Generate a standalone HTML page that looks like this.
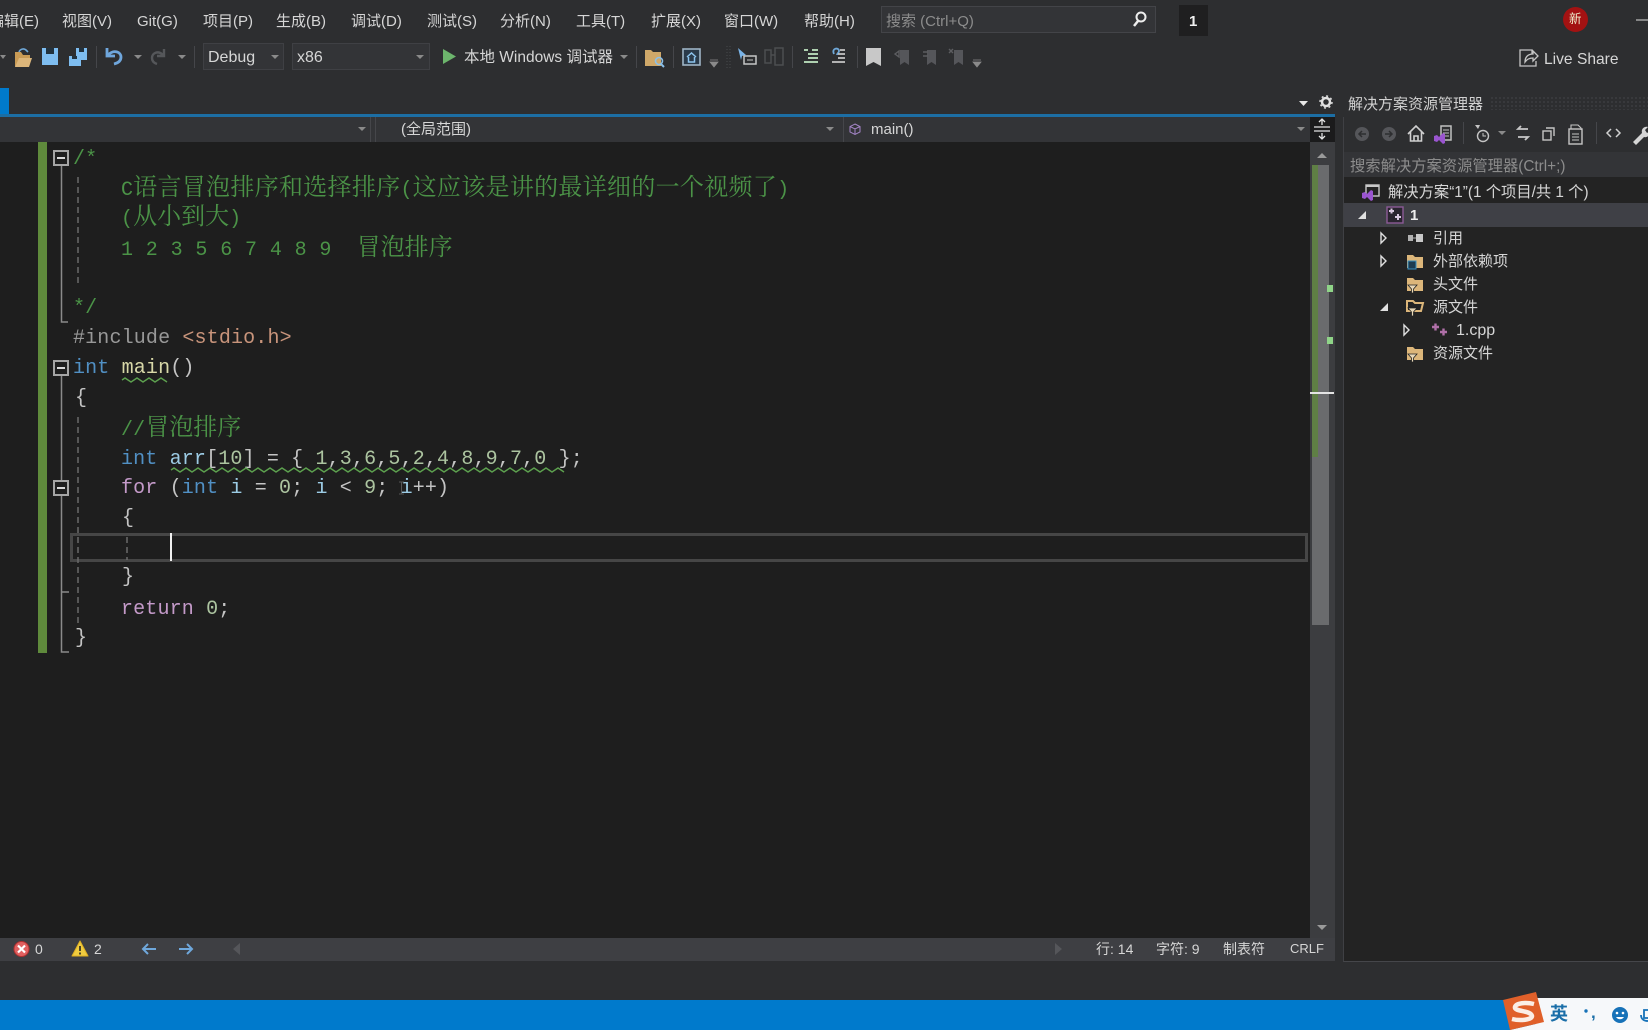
<!DOCTYPE html>
<html lang="zh"><head><meta charset="utf-8"><title>Visual Studio</title>
<style>
html,body{margin:0;padding:0;width:1648px;height:1030px;overflow:hidden;background:#2d2e30;}
body{position:relative;font-family:"Liberation Sans","Noto Sans CJK SC",sans-serif;color:#e0e0e0;}
.b{position:absolute;}
.t{position:absolute;white-space:nowrap;transform:translateY(-50%);line-height:30px;font-size:15px;color:#d6d6d6;}
.c{position:absolute;white-space:pre;transform:translateY(-50%);line-height:30px;font-family:"Liberation Mono",monospace;font-size:20px;letter-spacing:.15px;color:#c4c4c4;left:73px;}
.c .z{font-family:"Noto Serif CJK SC",serif;font-size:24px;line-height:30px;letter-spacing:0;}
.g{color:#4b9347}.k{color:#5190c4}.f{color:#c49ac9}.v{color:#9ccbe4}.m{color:#d8d8a8}.n{color:#acc4a0}.s{color:#c8947b}.p{color:#989898}
svg{position:absolute;left:0;top:0;}
</style></head><body>
<!-- regions -->
<div class="b" style="left:0;top:88px;width:9px;height:26px;background:#007acc"></div>
<div class="b" style="left:0;top:114px;width:1335px;height:3px;background:#1c6ea4"></div>
<div class="b" style="left:0;top:117px;width:1335px;height:25px;background:#333437"></div>
<div class="b" style="left:0;top:142px;width:1335px;height:796px;background:#1e1e1e"></div>
<div class="b" style="left:370px;top:117px;width:1px;height:25px;background:#45464a"></div>
<div class="b" style="left:375px;top:117px;width:1px;height:25px;background:#45464a"></div>
<div class="b" style="left:843px;top:117px;width:1px;height:25px;background:#45464a"></div>
<div class="b" style="left:1310px;top:117px;width:25px;height:25px;background:#1b1b1c"></div>
<div class="b" style="left:0;top:938px;width:1335px;height:23px;background:#3e3f43"></div>
<div class="b" style="left:0;top:1000px;width:1648px;height:30px;background:#007acc"></div>
<!-- scrollbar -->
<div class="b" style="left:1310px;top:142px;width:25px;height:796px;background:#3c3d40"></div>
<div class="b" style="left:1312px;top:165px;width:17px;height:460px;background:#6a6b6d"></div>
<div class="b" style="left:1312px;top:165px;width:6px;height:292px;background:#5f7f45"></div>
<div class="b" style="left:1327px;top:285px;width:6px;height:7px;background:#8fd488"></div>
<div class="b" style="left:1327px;top:337px;width:6px;height:7px;background:#8fd488"></div>
<div class="b" style="left:1310px;top:392px;width:24px;height:2px;background:#e4e4e4"></div>
<!-- solution panel -->
<div class="b" style="left:1343px;top:117px;width:305px;height:845px;background:#232323;border-left:1px solid #3f4044;box-sizing:border-box;border-bottom:1px solid #45464a"></div>
<div class="b" style="left:1344px;top:117px;width:304px;height:35px;background:#2d2e30"></div>
<div class="b" style="left:1344px;top:152px;width:304px;height:25px;background:#333437"></div>
<div class="b" style="left:1344px;top:203px;width:304px;height:24px;background:#3f4046"></div>
<div class="b" style="left:1490px;top:96px;width:158px;height:14px;background-image:radial-gradient(#3c3d40 1px,transparent 1px);background-size:4px 4px"></div>
<!-- menu -->
<div class="b" style="left:881px;top:6px;width:275px;height:27px;background:#333437;border:1px solid #434448;box-sizing:border-box"></div>
<div class="b" style="left:1179px;top:5px;width:29px;height:31px;background:#1f1f20"></div>
<span class="t" style="left:-11px;top:22px">编辑(E)</span>
<span class="t" style="left:62px;top:22px">视图(V)</span>
<span class="t" style="left:137px;top:22px">Git(G)</span>
<span class="t" style="left:203px;top:22px">项目(P)</span>
<span class="t" style="left:276px;top:22px">生成(B)</span>
<span class="t" style="left:351px;top:22px">调试(D)</span>
<span class="t" style="left:427px;top:22px">测试(S)</span>
<span class="t" style="left:500px;top:22px">分析(N)</span>
<span class="t" style="left:576px;top:22px">工具(T)</span>
<span class="t" style="left:651px;top:22px">扩展(X)</span>
<span class="t" style="left:724px;top:22px">窗口(W)</span>
<span class="t" style="left:804px;top:22px">帮助(H)</span>
<span class="t" style="left:886px;top:22px;color:#8c8c8c">搜索 (Ctrl+Q)</span>
<span class="t" style="left:1189px;top:22px;font-weight:bold;color:#f0f0f0;font-size:15px">1</span>
<div class="b" style="left:1563px;top:7px;width:25px;height:25px;border-radius:50%;background:#a31212"></div>
<span class="t" style="left:1569px;top:19px;font-size:12.5px;color:#eec">新</span>
<span class="t" style="left:1636px;top:20px;color:#ddd">—</span>
<!-- toolbar -->
<div class="b" style="left:203px;top:43px;width:81px;height:27px;background:#333437;border:1px solid #3f4044;box-sizing:border-box"></div>
<div class="b" style="left:292px;top:43px;width:138px;height:27px;background:#333437;border:1px solid #3f4044;box-sizing:border-box"></div>
<span class="t" style="left:208px;top:58px;font-size:16px">Debug</span>
<span class="t" style="left:297px;top:58px;font-size:16px">x86</span>
<span class="t" style="left:464px;top:58px;font-size:15.500px">本地 Windows 调试器</span>
<span class="t" style="left:1544px;top:60px;font-size:15.600px">Live Share</span>
<!-- nav -->
<span class="t" style="left:401px;top:130px;font-size:15px">(全局范围)</span>
<span class="t" style="left:871px;top:130px;font-size:15px">main()</span>
<!-- solution explorer text -->
<span class="t" style="left:1348px;top:105px;font-size:15px;color:#d0d0d0">解决方案资源管理器</span>
<span class="t" style="left:1350px;top:167px;font-size:15.300px;color:#8c8c8c">搜索解决方案资源管理器(Ctrl+;)</span>
<span class="t" style="left:1388px;top:193px;font-size:15.300px">解决方案“1”(1 个项目/共 1 个)</span>
<span class="t" style="left:1410px;top:216px;font-weight:bold;color:#eee">1</span>
<span class="t" style="left:1433px;top:239px">引用</span>
<span class="t" style="left:1433px;top:262px">外部依赖项</span>
<span class="t" style="left:1433px;top:285px">头文件</span>
<span class="t" style="left:1433px;top:308px">源文件</span>
<span class="t" style="left:1456px;top:331px;font-size:16px">1.cpp</span>
<span class="t" style="left:1433px;top:354px">资源文件</span>
<!-- status -->
<span class="t" style="left:35px;top:949px;font-size:14px">0</span>
<span class="t" style="left:94px;top:949px;font-size:14px">2</span>
<span class="t" style="left:1096px;top:949px;font-size:14px">行: 14</span>
<span class="t" style="left:1156px;top:949px;font-size:14px">字符: 9</span>
<span class="t" style="left:1223px;top:949px;font-size:14px">制表符</span>
<span class="t" style="left:1290px;top:949px;font-size:13px">CRLF</span>
<!-- editor adornments -->
<div class="b" style="left:38px;top:142px;width:9px;height:511px;background:#5f8a3c"></div>
<div class="b" style="left:70px;top:533px;width:1238px;height:29px;border:3px solid #464646;box-sizing:border-box"></div>
<!-- code -->
<div class="c g" style="top:160px">/*</div>
<div class="c g" style="top:188px;left:121px">C<span class="z" style="letter-spacing:.3px">语言冒泡排序和选择排序</span>(<span class="z" style="letter-spacing:.3px">这应该是讲的最详细的一个视频了</span>)</div>
<div class="c g" style="top:217px;left:121px">(<span class="z">从小到大</span>)</div>
<div class="c g" style="top:248px;left:121px;letter-spacing:.4px">1 2 3 5 6 7 4 8 9  <span class="z">冒泡排序</span></div>
<div class="c g" style="top:309px">*/</div>
<div class="c" style="top:339px"><span class="p">#include</span> <span class="s">&lt;stdio.h&gt;</span></div>
<div class="c" style="top:369px"><span class="k">int</span> <span class="m">main</span>()</div>
<div class="c" style="top:399px;left:75px">{</div>
<div class="c g" style="top:428px;left:121px">//<span class="z">冒泡排序</span></div>
<div class="c" style="top:460px;left:121px"><span class="k">int</span> <span class="v">arr</span>[<span class="n">10</span>] = { <span class="n">1</span>,<span class="n">3</span>,<span class="n">6</span>,<span class="n">5</span>,<span class="n">2</span>,<span class="n">4</span>,<span class="n">8</span>,<span class="n">9</span>,<span class="n">7</span>,<span class="n">0</span> };</div>
<div class="c" style="top:489px;left:121px"><span class="f">for</span> (<span class="k">int</span> <span class="v">i</span> = <span class="n">0</span>; <span class="v">i</span> &lt; <span class="n">9</span>; <span class="v">i</span>++)</div>
<div class="c" style="top:519px;left:122px">{</div>
<div class="c" style="top:578px;left:122px">}</div>
<div class="c" style="top:610px;left:121px"><span class="f">return</span> <span class="n">0</span>;</div>
<div class="c" style="top:639px;left:75px">}</div>
<!-- caret -->
<div class="b" style="left:170px;top:533px;width:2px;height:28px;background:#f0f0f0"></div>
<!-- sogou bar -->
<div class="b" style="left:1536px;top:998px;width:112px;height:32px;background:#f6f8fa"></div>

<svg width="1648" height="1030" viewBox="0 0 1648 1030" fill="none">
<!-- fold boxes -->
<g stroke="#a5a5a5" stroke-width="2" fill="#1e1e1e">
<rect x="54" y="151" width="14" height="14"/><rect x="54" y="361" width="14" height="14"/><rect x="54" y="481" width="14" height="14"/>
</g>
<g stroke="#d8d8d8" stroke-width="2"><path d="M57 158h8M57 368h8M57 488h8"/></g>
<g stroke="#8a8a8a" stroke-width="1.5">
<path d="M61.5 166V322H68M61.5 376V480M61.5 496V652H69M61.5 592H69"/>
</g>
<g stroke="#6a6a6a" stroke-width="1.5" stroke-dasharray="6 4">
<path d="M78 177V284M78 417V624M127 537V560"/>
</g>
<!-- squiggles -->
<g stroke="#5da14f" stroke-width="1.4">
<path d="M122 380l3-2 3 2 3 2 3-2 3-2 3 2 3 2 3-2 3-2 3 2 3 2 3-2 3-2 3 2 3 2"/>
<path d="M171 470l3-2 3 2 3 2 3-2 3-2 3 2 3 2 3-2 3-2 3 2 3 2 3-2 3-2 3 2 3 2 3-2 3-2 3 2 3 2 3-2 3-2 3 2 3 2 3-2 3-2 3 2 3 2 3-2 3-2 3 2 3 2 3-2 3-2 3 2 3 2 3-2 3-2 3 2 3 2 3-2 3-2 3 2 3 2 3-2 3-2 3 2 3 2 3-2 3-2 3 2 3 2 3-2 3-2 3 2 3 2 3-2 3-2 3 2 3 2 3-2 3-2 3 2 3 2 3-2 3-2 3 2 3 2 3-2 3-2 3 2 3 2 3-2 3-2 3 2 3 2 3-2 3-2 3 2 3 2 3-2 3-2 3 2 3 2 3-2 3-2 3 2 3 2 3-2 3-2 3 2 3 2 3-2 3-2 3 2 3 2 3-2 3-2 3 2 3 2 3-2 3-2 3 2 3 2 3-2 3-2 3 2 3 2 3-2 3-2 3 2 3 2 3-2 3-2 3 2 3 2 3-2 3-2 3 2 3 2 3-2 3-2 3 2 3 2 3-2 3-2 3 2 3 2 3-2 3-2 3 2 3 2"/>
</g>
<!-- I-beam -->
<path d="M399 482h5M399 494h5M401.500 482v12" stroke="#555" stroke-width="1"/>
<!-- search icon -->
<circle cx="1141" cy="17" r="4.500" stroke="#eee" stroke-width="2"/><path d="M1138 21l-4 5" stroke="#eee" stroke-width="2.500"/>
<!-- toolbar separators -->
<g stroke="#45464a"><path d="M96.500 46v22M194.500 46v22M636.500 46v22M673.500 46v22M792.500 46v22M857.500 46v22"/></g>
<!-- dropdown triangles -->
<g fill="#8a8a8a">
<path d="M0 55h6l-3 4zM134 55h8l-4 4zM178 55h8l-4 4z"/>
<path d="M271 55h8l-4 4zM416 55h8l-4 4zM620 55h8l-4 4z"/>
<path d="M358 127h8l-4 4zM826 127h8l-4 4zM1297 127h8l-4 4z"/>
<path d="M1498 131h8l-4 4z"/>
</g>
<path d="M1299 101h9l-4.500 5z" fill="#e8e8e8"/>
<!-- open folder -->
<path d="M15 52h6l2 3h7v3H20l-5 9z" fill="#c99b55"/><path d="M19 58h13l-3 9H15z" fill="#dcb67a"/><path d="M19 52c1-3 5-4 7-2l2 2" stroke="#6fa8d8" stroke-width="1.600"/>
<!-- save -->
<path d="M42 48h16v17H42z" fill="#7ebdf0"/><path d="M46 48h8v6h-8z" fill="#22323e"/>
<!-- save all -->
<path d="M69 56h12v10H69z" fill="#7ebdf0"/><path d="M76 48h11v12H76z" fill="#7ebdf0"/><path d="M79 48h5v4h-5zM72 56h5v3h-5z" fill="#22323e"/>
<!-- undo / redo -->
<path d="M107 48v8h8M108 55c6-6 13-3 13 2 0 4-3 6-7 7" stroke="#6fa6dc" stroke-width="2.800"/>
<path d="M164 49v7h-7M163 55c-5-5-11-2-11 3 0 3 2 5 5 6" stroke="#55575a" stroke-width="2.400"/>
<!-- play -->
<path d="M443 49l13 7.500-13 7.500z" fill="#6cb56c"/>
<!-- folder search -->
<path d="M645 50h6l2 2h8v14h-16z" fill="#cfa869"/><circle cx="659" cy="61" r="3.500" stroke="#8cc0e8" stroke-width="1.600"/><path d="M661 64l3 3" stroke="#8cc0e8" stroke-width="2"/>
<!-- home window -->
<rect x="683" y="49" width="17" height="16" stroke="#9eb4c6" stroke-width="1.600" fill="#2a3a4a"/><path d="M687 57l4.500-4 4.500 4M688.500 57v5h6v-5" stroke="#8cc4ee" stroke-width="1.500"/>
<path d="M710 60h8M710 62h8l-4 5z" stroke="#8a8a8a" fill="#8a8a8a" stroke-width=".8"/>
<path d="M727 46v22M730 46v22" stroke="#48494c" stroke-dasharray="1 2"/>
<!-- step -->
<path d="M738 48l8 7-4 1-1 4z" fill="#7ab4e8"/><rect x="744" y="56" width="12" height="8" stroke="#c5c5c5" stroke-width="1.500"/><path d="M747 60h6" stroke="#c5c5c5"/>
<path d="M765 50h6v13h-6zM775 48h8v17h-8zM771 55h4" stroke="#4d4e50" stroke-width="1.500"/>
<!-- comment icons -->
<path d="M804 50h4M808 54h10M808 58h10M804 62h14M812 50h6" stroke="#aed0b0" stroke-width="2"/>
<path d="M834 54c-3-6 5-7 5-3 0 2-2 2-2 4" stroke="#6fa8d8" stroke-width="1.800"/><path d="M838 54h7M838 58h7M832 62h13M840 50h5" stroke="#c5c5c5" stroke-width="1.800"/>
<!-- bookmarks -->
<path d="M866 48h15v18l-7.500-4-7.500 4z" fill="#c8c8c8"/>
<path d="M900 50h9v15l-4.500-3-4.500 3zM927 50h9v15l-4.500-3-4.500 3zM954 50h9v15l-4.500-3-4.500 3z" fill="#55565a"/>
<path d="M895 54l4-3v6zM923 52h5M923 56h5M949 49l4 4M953 49l-4 4" stroke="#5c5d60" stroke-width="1.400"/>
<path d="M973 60h8M973 62h8l-4 5z" stroke="#8a8a8a" fill="#8a8a8a" stroke-width=".8"/>
<!-- live share -->
<path d="M1532 54v-4h-12v16h16v-5" stroke="#c5c5c5" stroke-width="1.300"/><path d="M1525 62c0-5 3-8 8-8v-3l5 5-5 5v-3c-3 0-6 1-8 4z" stroke="#c5c5c5" stroke-width="1.300"/>
<!-- nav cube -->
<path d="M855 124l5 2.500v5.500l-5 2.500-5-2.500v-5.500zM850 126.500l5 2.500 5-2.500M855 129v5.500" stroke="#a585c8" stroke-width="1"/>
<!-- split button -->
<path d="M1314 127h16M1314 131h16M1322 120v5M1322 133v5M1319 122l3-3 3 3M1319 136l3 3 3-3" stroke="#e4e4e4" stroke-width="1.300"/>
<!-- gear -->
<circle cx="1326" cy="102" r="4" stroke="#e0e0e0" stroke-width="2.500"/><circle cx="1326" cy="102" r="6" stroke="#e0e0e0" stroke-width="1.500" stroke-dasharray="2 2.700"/>
<!-- scroll arrows -->
<path d="M1317 158l5-5 5 5z" fill="#9a9a9a"/><path d="M1317 925l5 5 5-5z" fill="#9a9a9a"/>
<!-- panel toolbar -->
<circle cx="1362" cy="134" r="7" fill="#55565a"/><path d="M1366 134h-7M1362 131l-3 3 3 3" stroke="#2d2e30" stroke-width="1.500"/>
<circle cx="1389" cy="134" r="7" fill="#55565a"/><path d="M1385 134h7M1389 131l3 3-3 3" stroke="#2d2e30" stroke-width="1.500"/>
<path d="M1408 134l8-8 8 8M1410.500 132v9h11v-9M1414 141v-5h4v5" stroke="#d0d0d0" stroke-width="1.600"/>
<rect x="1441" y="126" width="10" height="14" stroke="#c0c0c0" stroke-width="1.500"/><path d="M1443 130h6M1443 133h6M1443 136h6" stroke="#c0c0c0"/><path d="M1434 136l3-1 2 2 4-4 2 1v9l-2 1-4-4-2 2-3-1z" fill="#9a55d0"/>
<path d="M1463.500 122v22" stroke="#45464a"/>
<circle cx="1483" cy="136" r="5.500" stroke="#c5c5c5" stroke-width="1.400"/><path d="M1483 133v3h3" stroke="#c5c5c5"/><path d="M1475 125h5l-2 4z" fill="#c5c5c5"/>
<path d="M1528 129h-10l3-3M1518 137h10l-3 3" stroke="#c8c8c8" stroke-width="1.800"/>
<rect x="1543" y="131" width="8" height="9" stroke="#c5c5c5" stroke-width="1.400"/><path d="M1546 128h8v8" stroke="#c5c5c5" stroke-width="1.400"/>
<rect x="1569" y="129" width="13" height="15" stroke="#c5c5c5" stroke-width="1.400"/><path d="M1571 129v-4h7l3 3v2M1572 134h7M1572 137h7M1572 140h7" stroke="#c5c5c5" stroke-width="1.100"/>
<path d="M1596.500 122v22" stroke="#45464a"/>
<path d="M1611 129l-4 4 4 4M1616 129l4 4-4 4" stroke="#d0d0d0" stroke-width="1.500"/>
<path d="M1633 142l9-9c-1-4 2-7 6-6l-3 3 2 3 3-2c1 4-3 7-6 6l-8 8z" fill="#d5d5d5"/>
<!-- tree arrows -->
<path d="M1358 219l8-8v8z" fill="#e0e0e0"/><path d="M1380 311l8-8v8z" fill="#e0e0e0"/>
<g stroke="#e0e0e0" stroke-width="1.400"><path d="M1381 233l5 5-5 5zM1381 256l5 5-5 5zM1404 325l5 5-5 5z"/></g>
<!-- tree icons -->
<rect x="1366" y="185" width="13" height="11" stroke="#c8c8c8" stroke-width="1.400"/><rect x="1366" y="185" width="13" height="2" fill="#c8c8c8"/><path d="M1362 193l3-1 2 2 4-4 2 1v9l-2 1-4-4-2 2-3-1z" fill="#9a55d0"/>
<rect x="1387" y="207" width="16" height="16" stroke="#8b5a96" stroke-width="1.400" fill="#2a2530"/><path d="M1389 211h5M1391.500 208.500v5M1395 217h6M1398 214v6" stroke="#d8c8e0" stroke-width="2"/>
<rect x="1408" y="235" width="5" height="6" fill="#b0b0b0"/><rect x="1416" y="234" width="7" height="8" fill="#c8c8c8"/><path d="M1413 238h3" stroke="#b0b0b0"/>
<path d="M1407 255h6l2 2h8v11h-16z" fill="#dcb67a"/><rect x="1408" y="261" width="8" height="8" fill="#1e3c50" stroke="#3a8fc0"/>
<g><path d="M1407 278h6l2 2h8v11h-16z" fill="#dcb67a"/><path d="M1408 285h9l-3.500 4v4h-2v-4z" fill="#e8d8b8" stroke="#232323" stroke-width=".8"/></g>
<g><path d="M1407 301h6l2 2h8l-2 8h-14z" fill="none" stroke="#dcb67a" stroke-width="2"/><path d="M1408 308h9l-3.500 4v4h-2v-4z" fill="#e8d8b8" stroke="#232323" stroke-width=".8"/></g>
<g><path d="M1407 347h6l2 2h8v11h-16z" fill="#dcb67a"/><path d="M1408 354h9l-3.500 4v4h-2v-4z" fill="#e8d8b8" stroke="#232323" stroke-width=".8"/></g>
<path d="M1432 327h7M1435.500 323.500v7M1440 332h7M1443.500 328.500v7" stroke="#b070a8" stroke-width="2.400"/>
<!-- status icons -->
<circle cx="21.500" cy="949" r="7.500" fill="#e06060" stroke="#b03030"/><path d="M18 945.500l7 7M25 945.500l-7 7" stroke="#fff" stroke-width="2.200"/>
<path d="M80 941l8 15H72z" fill="#f0cc40" stroke="#e0b020" stroke-linejoin="round"/><path d="M80 946v5M80 952.500v2" stroke="#222" stroke-width="1.600"/>
<path d="M156 949h-13M148 944l-5 5 5 5" stroke="#6fa8dc" stroke-width="2"/>
<path d="M179 949h13M187 944l5 5-5 5" stroke="#6fa8dc" stroke-width="2"/>
<path d="M240 943l-7 6 7 6z" fill="#55565a"/><path d="M1055 943l7 6-7 6z" fill="#55565a"/>
<!-- sogou -->
<path d="M1510 1030l34-8v8z" fill="#f6f8fa"/>
<path d="M1503 1000l33-8 8 30-34 8z" fill="#e0602a"/>
<path d="M1534 1004c-8-2-18-1-19 3-1 5 16 3 17 9 0 4-12 5-20 3" stroke="#fbeee6" stroke-width="4.500"/>
<circle cx="1620" cy="1015" r="8" fill="#1772b8"/><circle cx="1617" cy="1013" r="1.300" fill="#fff"/><circle cx="1623" cy="1013" r="1.300" fill="#fff"/><path d="M1616 1017c2 3 6 3 8 0z" fill="#fff"/>
<path d="M1648 1010h-4v8h4M1641 1015c0 4 3 6 7 6" stroke="#1772b8" stroke-width="1.800"/>
<circle cx="1586" cy="1011" r="1.700" fill="#1772b8"/>
</svg>
<span class="t" style="left:1550px;top:1014px;font-size:18px;font-weight:bold;color:#1a6ea8">英</span>
<span class="t" style="left:1591px;top:1013px;font-size:17px;font-weight:bold;color:#1a6ea8">,</span>
</body></html>
